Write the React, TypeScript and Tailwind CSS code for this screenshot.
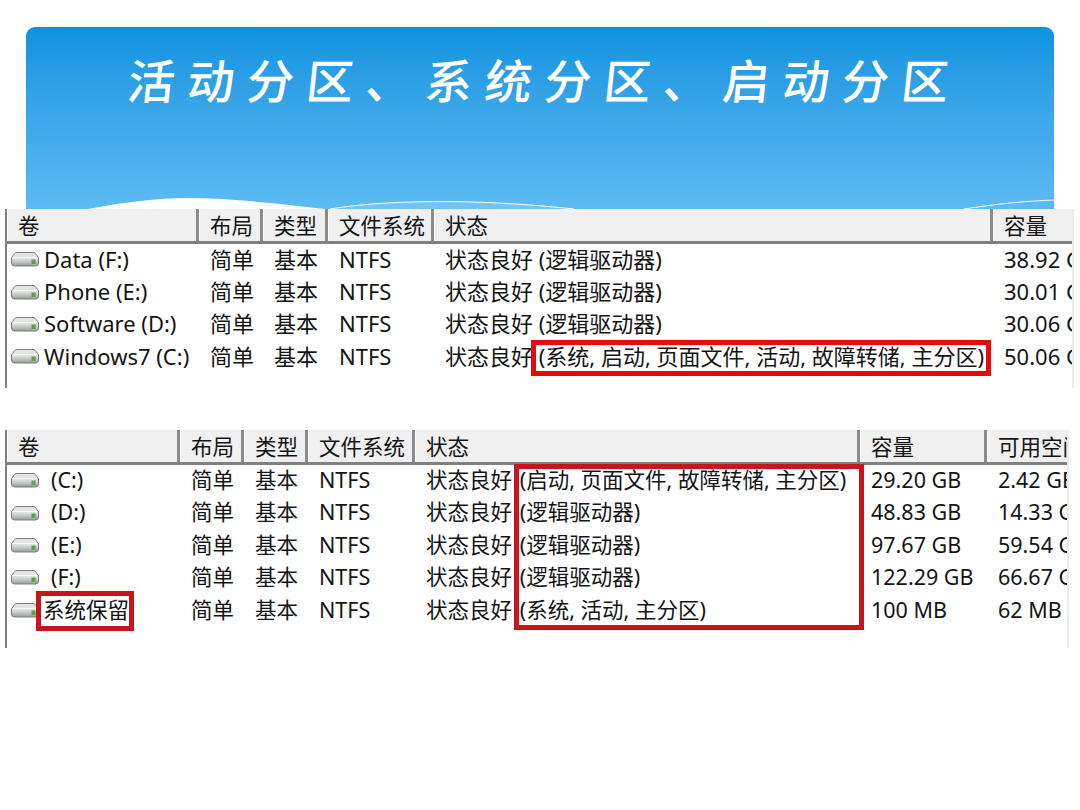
import React from "react";

const F = '"Noto Sans","Noto Sans CJK SC",sans-serif';

function Drive() {
  return (
    <svg width="28" height="16" viewBox="0 0 28 16" className="shrink-0">
      <defs>
        <linearGradient id="dr" x1="0" y1="0" x2="0" y2="1">
          <stop offset="0" stopColor="#e4e7e4" />
          <stop offset="0.5" stopColor="#dcdfdc" />
          <stop offset="1" stopColor="#989c98" />
        </linearGradient>
      </defs>
      <path d="M6 1.5h16c1.5 0 2.5.8 3.3 2L27.5 7v5a3 3 0 0 1-3 3H3.5a3 3 0 0 1-3-3V7l2.2-3.5c.8-1.2 1.8-2 3.3-2z" fill="url(#dr)" stroke="#7a7d7a" />
      <path d="M1.5 6.5h25" stroke="#f5f7f5" strokeWidth="1.4" />
      <rect x="20.5" y="8.5" width="4" height="4.5" fill="#55a648" />
    </svg>
  );
}

type Col = { w: number; label: string };
type Row = { name: string; nameX: number; cells: string[] };

function Table({ cols, rows, width, height, size }: { cols: Col[]; rows: Row[]; width: number; height: number; size: number }) {
  return (
    <div
      className="ml-[5px] border-l-2 border-[#808080] border-r-2 border-r-[#ececec] overflow-hidden text-[#141414] whitespace-nowrap"
      style={{ width, height, fontFamily: F }}
    >
      <div className="flex h-[35px] bg-[#f0f0f0] border-b-[3px] border-[#808080]">
        {cols.map((c, i) => (
          <div
            key={i}
            className="shrink-0 h-full pl-[11px] text-[21.5px] leading-[33px] border-r-[3px] border-[#8a8a8a] shadow-[inset_1px_0_0_#ffffff] last:border-r-0"
            style={{ width: c.w }}
          >
            {c.label}
          </div>
        ))}
      </div>
      {rows.map((r, i) => (
        <div key={i} className="flex h-[32.4px] items-center pb-[2px]" style={{ fontSize: size }}>
          <div className="shrink-0 flex items-center pl-1" style={{ width: cols[0].w }}>
            <Drive />
            <span style={{ marginLeft: r.nameX }}>{r.name}</span>
          </div>
          {r.cells.map((c, j) => (
            <div key={j} className="shrink-0 pl-[11px]" style={{ width: cols[j + 1].w }}>
              {c}
            </div>
          ))}
        </div>
      ))}
    </div>
  );
}

const cols1: Col[] = [
  { w: 192, label: "卷" },
  { w: 64, label: "布局" },
  { w: 65, label: "类型" },
  { w: 106, label: "文件系统" },
  { w: 559, label: "状态" },
  { w: 80, label: "容量" },
];
const cols2: Col[] = [
  { w: 173, label: "卷" },
  { w: 64, label: "布局" },
  { w: 64, label: "类型" },
  { w: 107, label: "文件系统" },
  { w: 445, label: "状态" },
  { w: 127, label: "容量" },
  { w: 90, label: "可用空间" },
];

const rows1: Row[] = [
  { name: "Data (F:)", nameX: 5, cells: ["简单", "基本", "NTFS", "状态良好 (逻辑驱动器)", "38.92 GB"] },
  { name: "Phone (E:)", nameX: 5, cells: ["简单", "基本", "NTFS", "状态良好 (逻辑驱动器)", "30.01 GB"] },
  { name: "Software (D:)", nameX: 5, cells: ["简单", "基本", "NTFS", "状态良好 (逻辑驱动器)", "30.06 GB"] },
  { name: "Windows7 (C:)", nameX: 5, cells: ["简单", "基本", "NTFS", "状态良好 (系统, 启动, 页面文件, 活动, 故障转储, 主分区)", "50.06 GB"] },
];
const rows2: Row[] = [
  { name: "(C:)", nameX: 12, cells: ["简单", "基本", "NTFS", "状态良好\u200a (启动, 页面文件, 故障转储, 主分区)", "29.20 GB", "2.42 GB"] },
  { name: "(D:)", nameX: 12, cells: ["简单", "基本", "NTFS", "状态良好\u200a (逻辑驱动器)", "48.83 GB", "14.33 GB"] },
  { name: "(E:)", nameX: 12, cells: ["简单", "基本", "NTFS", "状态良好\u200a (逻辑驱动器)", "97.67 GB", "59.54 GB"] },
  { name: "(F:)", nameX: 12, cells: ["简单", "基本", "NTFS", "状态良好\u200a (逻辑驱动器)", "122.29 GB", "66.67 GB"] },
  { name: "系统保留", nameX: 4, cells: ["简单", "基本", "NTFS", "状态良好\u200a (系统, 活动, 主分区)", "100 MB", "62 MB"] },
];

export default function App() {
  return (
    <div className="relative w-[1080px] h-[810px] bg-white overflow-hidden pt-[27px]">
      <div className="relative ml-[26px] w-[1028px] h-[182px] rounded-t-[9px] overflow-hidden bg-gradient-to-b from-[#0a93e0] to-[#5cbbf2]">
        <div
          className="pt-[23px] pl-[12px] text-center text-white text-[47px] leading-[58px] tracking-[12.5px] font-medium -skew-x-6 whitespace-nowrap"
          style={{ fontFamily: '"Noto Sans CJK SC",sans-serif' }}
        >
          活动分区、系统分区、启动分区
        </div>
        <svg className="absolute left-0 bottom-0" width="1028" height="182" viewBox="0 0 1028 182">
          <path d="M62 182C100 175 130 171 162 171C210 171 260 178 300 182Z" fill="#ffffff" />
          <path d="M304 182C340 176 380 174.5 422 174.5C470 175 510 178 548 182Z" fill="#74c4f3" />
          <path d="M304 182C340 176 380 174.5 422 174.5C470 175 510 178 548 182" fill="none" stroke="#ffffff" strokeWidth="1" />
          <path d="M938 182C970 177 1000 174 1028 173" fill="none" stroke="#ffffff" strokeWidth="1" />
        </svg>
      </div>

      <Table cols={cols1} rows={rows1} width={1069} height={179} size={22} />
      <div className="h-[42px]" />
      <Table cols={cols2} rows={rows2} width={1064} height={218} size={21.5} />

      <div className="absolute left-[531px] top-[340px] w-[460px] h-[36px] border-[5px] border-[#e60a0a]" />
      <div className="absolute left-[514px] top-[464px] w-[350px] h-[166px] border-[5px] border-[#c8141c]" />
      <div className="absolute left-[36px] top-[591px] w-[98px] h-[40px] border-[5px] border-[#c8141c]" />
    </div>
  );
}
